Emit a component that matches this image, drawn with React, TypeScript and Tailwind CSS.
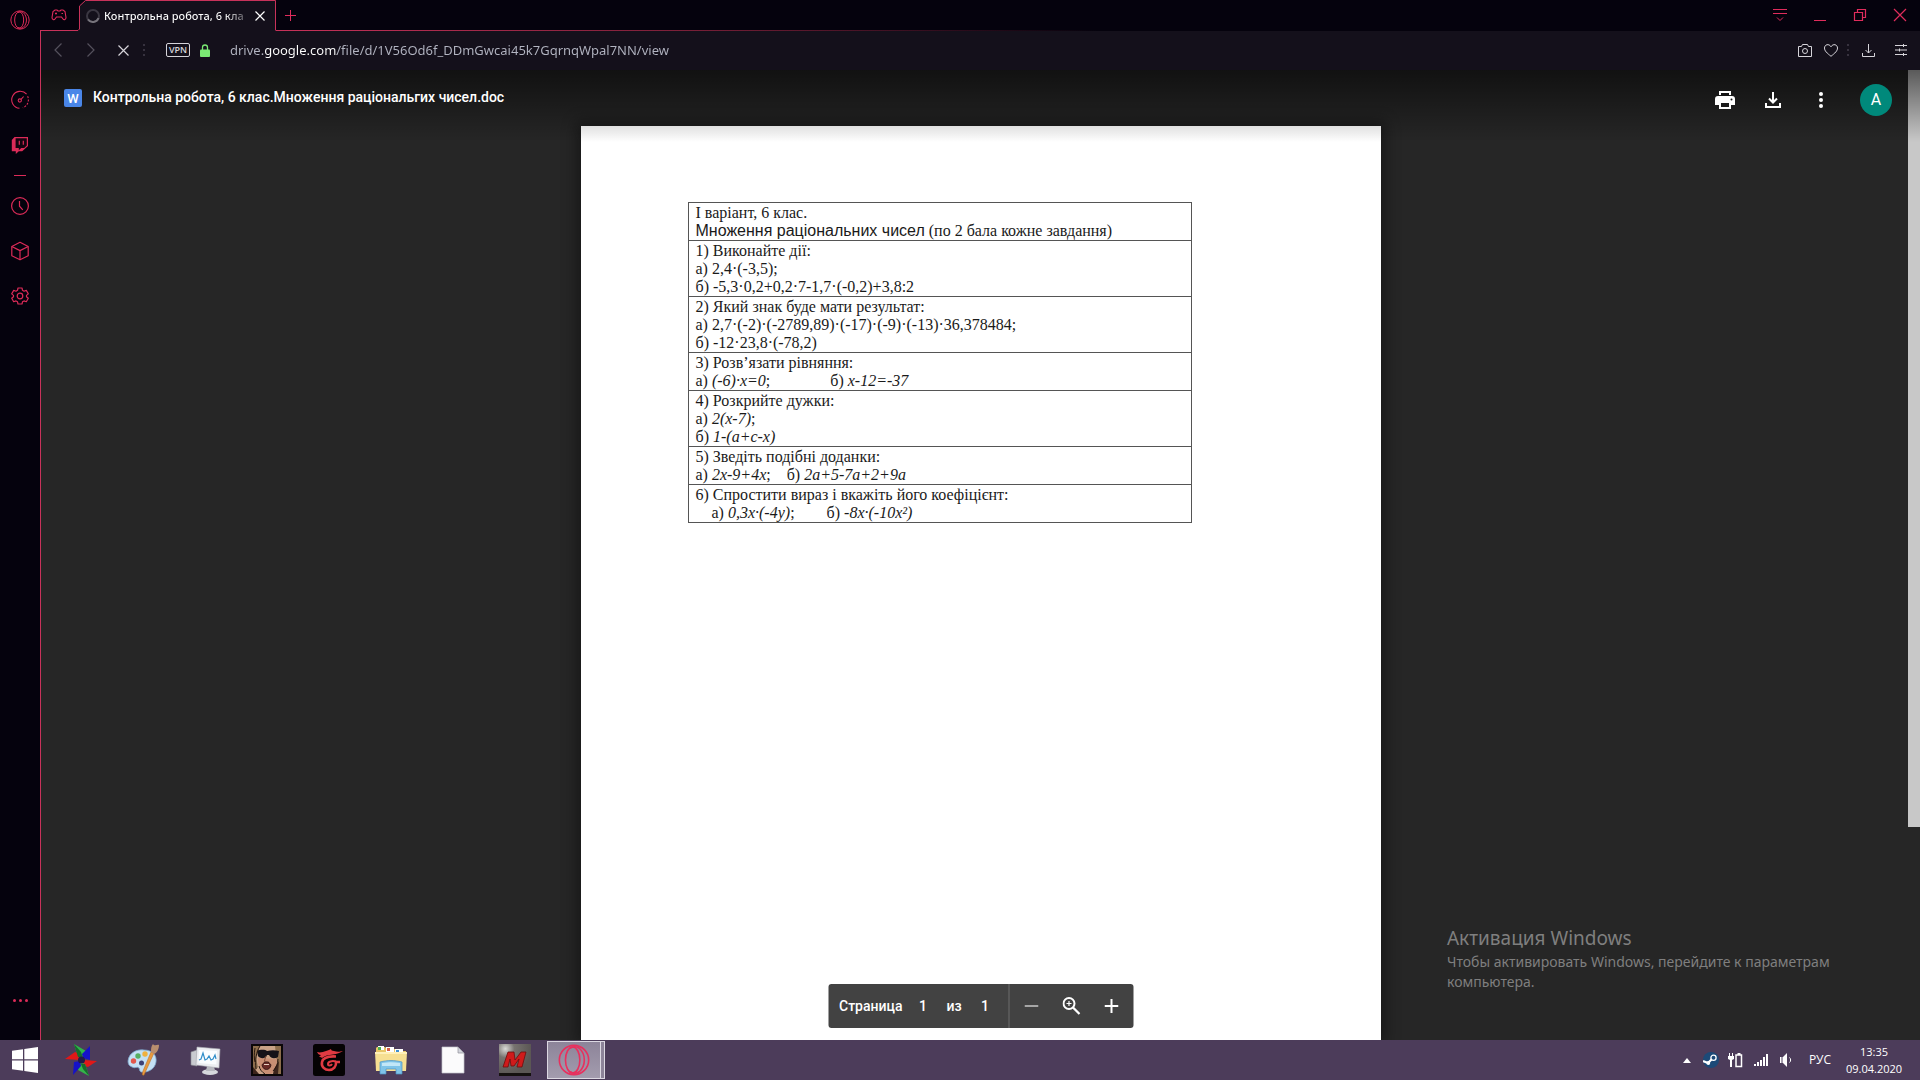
import React from "react";

type IconProps = { className?: string };

/* ---------- Browser sidebar icons ---------- */

const OperaRing = ({ className }: IconProps) => (
  <svg viewBox="0 0 24 24" className={className} fill="none" stroke="currentColor" strokeWidth="1.2" aria-hidden="true">
    <circle cx="12" cy="12" r="11" />
    <ellipse cx="11" cy="12" rx="5.4" ry="9.8" />
    <path d="M9 3.200C11.500 1.600 14 1.800 16 3.200c5 4.600 5 13 0 17.600-2 1.400-4.500 1.600-7 0" />
  </svg>
);

const GaugeIcon = () => (
  <svg viewBox="0 0 20 20" className="size-5" fill="none" stroke="currentColor" strokeWidth="1.100" aria-hidden="true">
    <path d="M9.500 18.300A8.500 8.500 0 1 1 16.600 4.200" />
    <path d="M17.600 6.200a8.500 8.500 0 0 1-4.800 11.600" strokeDasharray="2 1.400" />
    <circle cx="9.800" cy="10.500" r="1.600" />
    <path d="m11 9.300 2.600-2.800" />
  </svg>
);

const TwitchIcon = () => (
  <svg viewBox="0 0 20 20" className="size-5" aria-hidden="true">
    <path d="M4.500 2 1.800 5v11.200h4V19l3-2.800h3.400L18 11V2Z" fill="currentColor" />
    <path d="M5.600 3.200h11.200v7.400l-2.600 2.400h-3L8.800 15.200V13H5.600Z" fill="#14040f" />
    <path d="M9.300 5.800v4M13.300 5.800v4" stroke="currentColor" strokeWidth="1.200" />
  </svg>
);

const ClockIcon = () => (
  <svg viewBox="0 0 20 20" className="size-5" fill="none" stroke="currentColor" strokeWidth="1.200" aria-hidden="true">
    <circle cx="10" cy="10" r="8.400" />
    <path d="M9.500 5v5.200l3.300 3.600" />
  </svg>
);

const CubeIcon = () => (
  <svg viewBox="0 0 20 20" className="size-5" fill="none" stroke="currentColor" strokeWidth="1.200" strokeLinejoin="round" aria-hidden="true">
    <path d="m10 1.300 8.200 4.200v9.200L10 18.800l-8.200-4.100V5.500Z" />
    <path d="M1.800 5.500 10 9.600l8.200-4.100M10 9.600v9.200" />
  </svg>
);

const GearIcon = () => (
  <svg viewBox="0 0 20 20" className="size-5" fill="none" stroke="currentColor" strokeWidth="1.200" strokeLinejoin="round" aria-hidden="true">
    <path d="M8 2h4l.5 2.300 1.500.9 2.300-.8 2 3.500-1.800 1.500v1.300l1.800 1.500-2 3.500-2.300-.8-1.500.9L12 18H8l-.5-2.200-1.500-.9-2.300.8-2-3.500 1.800-1.500V9.400L1.700 7.900l2-3.500 2.300.8 1.500-.9Z" />
    <circle cx="10" cy="10" r="2.800" />
  </svg>
);

/* ---------- Taskbar icons ---------- */

const WindowsLogo = () => (
  <svg viewBox="0 0 26 26" className="size-[26px]" fill="#fff" aria-hidden="true">
    <path d="M0 3.800 11 2.200V12.200H0ZM12.300 2 26 0v12.200H12.300ZM0 13.500h11v10.200L0 22.200ZM12.300 13.500H26V26l-13.700-2Z" />
  </svg>
);

const PinwheelIcon = () => (
  <svg viewBox="0 0 32 32" className="size-8" aria-hidden="true">
    <path d="M9 0 21 7l-2 7-6-1Z" fill="#2fb54a" />
    <path d="M25 2v14l-7-2-1-4Z" fill="#1512c8" />
    <path d="m32 17-9 6-7-2 3-5Z" fill="#e01818" />
    <path d="m24 32-11-6 2-8 5 2Z" fill="#35b44a" />
    <path d="M8 31 9 18l6-1 1 5Z" fill="#1512c8" />
    <path d="m0 15 10-7 6 2-2 6Z" fill="#e01818" />
    <path d="m9 0 7 8 2 6-5-1ZM24 32l-6-7-2-5 4 0Z" fill="#156b2b" />
    <circle cx="16.500" cy="16" r="3.500" fill="#221a4a" />
  </svg>
);

const PaintIcon = () => (
  <svg viewBox="0 0 32 32" className="size-8" aria-hidden="true">
    <path d="M1 17C2 9 9 5 17 6c9 0 13 6 12 12-1 7-8 11-15 10-2-1-1-3-2-4-2-2-4 1-7-1-3-1-4-3-4-6Z" fill="#c4e0f4" stroke="#7aa6cc" strokeWidth=".8" />
    <circle cx="6.500" cy="17" r="2.700" fill="#e2584c" />
    <circle cx="11" cy="12" r="2.700" fill="#56ae62" />
    <circle cx="18" cy="10" r="2.700" fill="#efb13f" />
    <circle cx="14.500" cy="19" r="2.500" fill="#3d4175" />
    <path d="m24 8 3 1-10 22c-2 1-2-1-1-4Z" fill="#e99a3e" stroke="#b36b22" strokeWidth=".5" />
    <path d="M24 8c0-3 0-6 2-8 2 3 4 0 6 1 0 4-2 8-5 9Z" fill="#b98e6e" />
  </svg>
);

const MonitorIcon = () => (
  <svg viewBox="0 0 32 32" className="size-8" aria-hidden="true">
    <path d="m2 8 6-2v16l-6-1Z" fill="#c9cbd0" stroke="#8b8d94" strokeWidth=".6" />
    <ellipse cx="21" cy="28" rx="8" ry="3" fill="#d6d8dc" />
    <path d="M18 22h7l1 5h-9Z" fill="#b7b9bf" />
    <path d="m8 3 23 2-1 19L7 21Z" fill="#eceef1" stroke="#a9abb2" strokeWidth=".6" />
    <path d="m10 6 18 1-.7 13.500L9.500 19Z" fill="#fafdff" />
    <path d="m10 16 2-1 2-6 2 7 2-1 2-3 2 4 2-1 2-4 1 4" fill="none" stroke="#2f8dc9" strokeWidth="1.200" />
  </svg>
);

const PortraitIcon = () => (
  <svg viewBox="0 0 32 32" className="size-8" aria-hidden="true">
    <path d="M0 0h32v32H0Z" fill="#0b0708" />
    <path d="M2 2h28v28H2Z" fill="#c9a287" />
    <path d="M2 2h7L5 14l2 9-5 7ZM24 2h6v28h-6l2-10Z" fill="#8c6d4c" />
    <path d="M7 14c0 8 3 13 8 16h5c4-3 6-8 6-15Z" fill="#c98f74" />
    <path d="M6 7c4-2 9-1 10 0 4-1 8-1 12 0l-1 6c-3 2-7 2-9-2h-2c-1 4-7 4-9 1Z" fill="#141218" />
    <path d="M15 12c-1 3-2 5-1 6h4" stroke="#7d4a38" fill="none" />
    <path d="M11 21c2-4 7-4 9 0-1 6-8 6-9 0Z" fill="#6a2a26" stroke="#2c1210" strokeWidth=".8" />
    <path d="M13 20.500h5" stroke="#e8cfc0" />
    <path d="m2 23 6 7H2ZM23 25l5-8-1 13h-5Z" fill="#3c241c" />
    <path d="M9 2C5 8 4 16 5 25M4 4c-1 6-1 10 0 14M27 15c0 5-2 9-5 12M8 22c1 4 3 6 6 8" stroke="#27170f" fill="none" />
  </svg>
);

const DragonIcon = () => (
  <svg viewBox="0 0 32 32" className="size-8" aria-hidden="true">
    <rect width="32" height="32" rx="2.500" fill="#050304" />
    <path d="M4 8c3 1 6 0 9-1 2-1 4-1 5-2 0 1 1 2 3 2 3 1 5 1 9 0-3 2-6 3-10 3.500-5 .5-8 1-11 3.500-1-1-1-1-3-1l2-2c-2 0-3-1-4-3Z" fill="#e03a42" />
    <path d="M23 12.500c-8-.5-13 1.500-14 5.500-1 5 3 8 7 8 4.500 0 7.500-3.500 7-8h4" stroke="#e03a42" strokeWidth="2.600" fill="none" />
    <path d="M23 17.500c-4-1-8 0-8 2.500 0 2 3 2 4 0" stroke="#e03a42" strokeWidth="2" fill="none" />
  </svg>
);

const FolderIcon = () => (
  <svg viewBox="0 0 32 32" className="size-8" aria-hidden="true">
    <path d="M2 3h8l2 2h8l2 2h9v18H1V4Z" fill="#e9c666" />
    <path d="M3 2h6v4H3Z" fill="#fff" />
    <path d="M3 3h3v3H3Z" fill="#4fae54" />
    <path d="M11 3h8v5h-8Z" fill="#fff" />
    <path d="M12 4h3v3h-3Z" fill="#d8604a" />
    <path d="M20 5h8v4h-8Z" fill="#fff" />
    <path d="M21 6h3v3h-3Z" fill="#3d8fd0" />
    <path d="M0 8h32l-1 19H1Z" fill="#f6df92" />
    <path d="M0 8h32v2H0Z" fill="#fff0b8" />
    <path d="M5 18c8-2 14-2 22 0v12h-6v-5H11v5H5Z" fill="#7fc4e8" stroke="#4d94c4" strokeWidth=".7" />
    <path d="M7 19c7-1 12-1 18 0v3H7Z" fill="#c2e7f8" />
  </svg>
);

const DocumentIcon = () => (
  <svg viewBox="0 0 24 28" className="h-7 w-6" aria-hidden="true">
    <path d="M1 1h16l6 6v20H1Z" fill="#fbfbfc" stroke="#c4c4cc" strokeWidth=".7" />
    <path d="M17 1v6h6Z" fill="#d3d5dc" stroke="#8f8f99" strokeWidth=".7" />
  </svg>
);

const RedMIcon = () => (
  <svg viewBox="0 0 32 32" className="size-8" aria-hidden="true">
    <defs>
      <radialGradient id="metal" cx=".2" cy=".15" r=".8">
        <stop offset="0" stopColor="#d9d9d6" />
        <stop offset=".35" stopColor="#77736f" />
        <stop offset="1" stopColor="#5b5754" />
      </radialGradient>
    </defs>
    <path d="M0 0h32v32H0Z" fill="url(#metal)" />
    <path d="M0 29h32v3H0Z" fill="#15110f" />
    <path d="M9 8h6l1 8 6-8h5l-4 15h-5l2-8-5 7h-3l-1-7-2 8H4Z" fill="#cf1b1b" stroke="#6d0d0d" strokeWidth=".8" />
  </svg>
);

const SteamIcon = () => (
  <svg viewBox="0 0 16 16" className="size-4" aria-hidden="true">
    <circle cx="8" cy="8" r="8" fill="#1c4a78" />
    <path d="m0 9 5 2 5-5" stroke="#fff" strokeWidth="2.200" fill="none" />
    <circle cx="10.500" cy="5.800" r="2.600" fill="#1c4a78" stroke="#fff" strokeWidth="1.300" />
    <circle cx="5.300" cy="11" r="1.900" fill="#fff" />
  </svg>
);

const BatteryIcon = () => (
  <svg viewBox="0 0 16 16" className="size-4" aria-hidden="true">
    <path d="M1.500 1v3M4.500 1v3" stroke="#fff" />
    <path d="M0 4h6v3L4 8v7H2V8L0 7Z" fill="#fff" />
    <path d="M8 3h5.500v11.500H8Z" fill="none" stroke="#fff" strokeWidth="1.500" />
    <path d="M9.500 1h3v2h-3Z" fill="#fff" />
  </svg>
);

const SignalIcon = () => (
  <svg viewBox="0 0 16 14" className="h-[14px] w-4" fill="#fff" aria-hidden="true">
    <path d="M1 11h2v2H1ZM4 9h2v4H4ZM7 7h2v6H7ZM10 4h2v9h-2ZM13 1h2v12h-2Z" />
  </svg>
);

const SoundIcon = () => (
  <svg viewBox="0 0 16 16" className="size-4" aria-hidden="true">
    <path d="M2 5h3l4-4v14l-4-4H2Z" fill="#fff" />
    <path d="M4 5v6" stroke="#4c3d5a" />
    <path d="M11.500 5.500c1.500 1 1.500 4 0 5" stroke="#fff" fill="none" />
  </svg>
);

/* ---------- Browser chrome ---------- */

const IconButton = ({ label, className = "", children }: { label: string; className?: string; children: React.ReactNode }) => (
  <button type="button" aria-label={label} className={`flex shrink-0 items-center justify-center ${className}`}>
    {children}
  </button>
);

const Sidebar = () => (
  <aside className="flex w-10 shrink-0 flex-col items-center bg-[#05020d] text-[#dc2b58]">
    <IconButton label="Opera" className="size-10">
      <OperaRing className="size-5" />
    </IconButton>
    <div className="mt-[46px] flex flex-col gap-[17px]">
      <IconButton label="Speed Dial" className="size-7"><GaugeIcon /></IconButton>
      <IconButton label="Twitch" className="size-7"><TwitchIcon /></IconButton>
    </div>
    <div className="my-4 h-px w-3 bg-[#dc2b58]" />
    <div className="flex flex-col gap-[17px]">
      <IconButton label="History" className="size-7"><ClockIcon /></IconButton>
      <IconButton label="Extensions" className="size-7"><CubeIcon /></IconButton>
      <IconButton label="Settings" className="size-7"><GearIcon /></IconButton>
    </div>
    <IconButton label="More" className="mt-auto mb-[26px] size-7 gap-[3px]">
      <span className="size-[3px] rounded-full bg-current" />
      <span className="size-[3px] rounded-full bg-current" />
      <span className="size-[3px] rounded-full bg-current" />
    </IconButton>
  </aside>
);

const TabStrip = () => (
  <div className="flex h-[31px] bg-[#05020d] text-[#e02c5c]">
    <div className="flex w-[38px] items-center justify-center border-b border-[#c8325a]">
      <IconButton label="GX Corner" className="size-7">
        <svg viewBox="0 0 16 12" className="h-3 w-4" fill="none" stroke="currentColor" strokeWidth="1.100" aria-hidden="true">
          <path d="M4 1h2l1 1h2l1-1h2l2 1.500 1 6c0 2-2 3-3 1.500L10.500 8h-5L4 10c-1 1.500-3 .5-3-1.500l1-6Z" />
          <path d="M5 3.500v2M4 4.500h2M10.500 4.500h1.500" />
        </svg>
      </IconButton>
    </div>
    <div className="relative flex w-[198px] items-center bg-[#14101b] pl-2">
      <svg viewBox="0 0 198 31" className="absolute inset-0 h-[31px] w-[198px]" fill="none" aria-hidden="true">
        <path d="M0 0h7L1 6v25H0Z" fill="#05020d" />
        <path d="M0 30.500 1.500 29V6l6-5.500h190v30" stroke="#c8325a" />
      </svg>
      <svg viewBox="0 0 14 14" className="relative size-[14px] shrink-0" fill="none" strokeWidth="2" aria-hidden="true">
        <circle cx="7" cy="7" r="6" stroke="#3b3742" />
        <path d="M12.500 9A6 6 0 0 1 2 10.500" stroke="#77747c" />
      </svg>
      <span className="relative ml-1 w-[146px] bg-[linear-gradient(90deg,#fff_0_120px,transparent_150px)] bg-clip-text font-['Noto_Sans'] text-[11px] leading-4 font-medium whitespace-nowrap text-transparent">
        Контрольна робота, 6 кла
      </span>
      <IconButton label="Close tab" className="relative size-5 text-white">
        <svg viewBox="0 0 10 10" className="size-[10px]" stroke="currentColor" strokeWidth="1.200" aria-hidden="true">
          <path d="m.5.5 9 9m0-9-9 9" />
        </svg>
      </IconButton>
    </div>
    <div className="flex flex-1 items-center border-b [border-image:linear-gradient(90deg,#c8325a,#7a2038_25%,transparent_50%)_1]">
      <IconButton label="New tab" className="size-7">
        <svg viewBox="0 0 11 11" className="size-[11px]" stroke="currentColor" aria-hidden="true">
          <path d="M5.500 0v11M0 5.500h11" />
        </svg>
      </IconButton>
      <div className="ml-auto flex">
        <IconButton label="Tab menu" className="h-7 w-10">
          <svg viewBox="0 0 14 14" className="size-[14px]" stroke="currentColor" fill="none" aria-hidden="true">
            <path d="M0 1.500h14M0 5.500h14M4 9.500l3 3 3-3" />
          </svg>
        </IconButton>
        <IconButton label="Minimize" className="h-7 w-10">
          <svg viewBox="0 0 14 14" className="size-[14px]" stroke="currentColor" aria-hidden="true">
            <path d="M1 12.500h12" />
          </svg>
        </IconButton>
        <IconButton label="Restore" className="h-7 w-10">
          <svg viewBox="0 0 14 14" className="size-[14px]" stroke="currentColor" fill="none" strokeWidth="1.200" aria-hidden="true">
            <path d="M1.500 4.500h8v8h-8ZM4.500 4.500v-3h8v8h-3" />
          </svg>
        </IconButton>
        <IconButton label="Close" className="h-7 w-10">
          <svg viewBox="0 0 14 14" className="size-[14px]" stroke="currentColor" strokeWidth="1.200" aria-hidden="true">
            <path d="m1 1 12 12m0-12L1 13" />
          </svg>
        </IconButton>
      </div>
    </div>
  </div>
);

const Dots = () => (
  <span className="flex flex-col gap-[3px]">
    <span className="size-[2px] bg-[#37323f]" />
    <span className="size-[2px] bg-[#37323f]" />
    <span className="size-[2px] bg-[#37323f]" />
  </span>
);

const AddressBar = () => (
  <div className="flex h-[39px] items-center bg-[#14101b] pb-px text-[#d6d4da]">
    <IconButton label="Back" className="h-8 w-[34px] text-[#55515d]">
      <svg viewBox="0 0 8 14" className="h-[14px] w-2" stroke="currentColor" fill="none" strokeWidth="1.200" aria-hidden="true">
        <path d="M7.500.5 1 7l6.500 6.500" />
      </svg>
    </IconButton>
    <IconButton label="Forward" className="h-8 w-8 text-[#55515d]">
      <svg viewBox="0 0 8 14" className="h-[14px] w-2" stroke="currentColor" fill="none" strokeWidth="1.200" aria-hidden="true">
        <path d="M.5.5 7 7 .5 13.500" />
      </svg>
    </IconButton>
    <IconButton label="Stop" className="h-8 w-8">
      <svg viewBox="0 0 11 11" className="size-[11px]" stroke="currentColor" strokeWidth="1.200" aria-hidden="true">
        <path d="m.5.5 10 10m0-10-10 10" />
      </svg>
    </IconButton>
    <div className="ml-1"><Dots /></div>
    <button type="button" className="ml-[21px] h-[14px] w-6 rounded-[2px] border border-[#d6d4da] font-['Open_Sans'] text-[9px] leading-3 font-semibold">
      VPN
    </button>
    <svg viewBox="0 0 10 13" className="ml-[10px] h-[13px] w-[10px]" aria-hidden="true">
      <path d="M2.500 6V3.500a2.500 2.500 0 0 1 5 0V6" stroke="#7bea74" strokeWidth="1.300" fill="none" />
      <rect y="5.500" width="10" height="7.500" rx="1" fill="#7bea74" />
    </svg>
    <input
      type="text"
      aria-label="Address"
      defaultValue="drive.google.com/file/d/1V56Od6f_DDmGwcai45k7GqrnqWpal7NN/view"
      className="ml-5 min-w-0 flex-1 bg-[linear-gradient(90deg,#b3b5c2_0_35px,#fff_35px_107px,#b3b5c2_107px)] bg-clip-text font-['Noto_Sans'] text-[13px] leading-5 text-transparent outline-none"
    />
    <IconButton label="Snapshot" className="size-[26px]">
      <svg viewBox="0 0 14 13" className="h-[13px] w-[14px]" stroke="currentColor" fill="none" aria-hidden="true">
        <path d="M.5 2.500h3l1-2h5l1 2h3v10H.5Z" />
        <circle cx="7" cy="7" r="2.500" />
      </svg>
    </IconButton>
    <IconButton label="Bookmark" className="size-[26px]">
      <svg viewBox="0 0 14 13" className="h-[13px] w-[14px]" stroke="currentColor" fill="none" aria-hidden="true">
        <path d="M7 12.300C3 9 .5 7 .5 4 .5.500 5-.800 7 2.800 9-.800 13.500.500 13.500 4c0 3-2.500 5-6.500 8.300Z" />
      </svg>
    </IconButton>
    <div className="ml-[3px] w-[8px]"><Dots /></div>
    <IconButton label="Downloads" className="w-[26px]">
      <svg viewBox="0 0 13 13" className="size-[13px]" stroke="currentColor" fill="none" aria-hidden="true">
        <path d="M6.500 0v9M3.500 6l3 3 3-3M.5 9v3.500h12V9" />
      </svg>
    </IconButton>
    <IconButton label="Easy Setup" className="mr-[6px] ml-[7px] w-[26px]">
      <svg viewBox="0 0 12 12" className="size-3" stroke="currentColor" aria-hidden="true">
        <path d="M0 1.500h12M0 6h12M0 10.500h12M8.500 0v3M4.500 4.500v3M8.500 9v3" />
      </svg>
    </IconButton>
  </div>
);

/* ---------- Document ---------- */

const rows: React.ReactNode[][] = [
  [
    "І варіант, 6 клас.",
    <><span className="font-['Liberation_Sans']">Множення раціональних чисел</span> (по 2 бала кожне завдання)</>,
  ],
  ["1) Виконайте дії:", "а) 2,4·(-3,5);", "б) -5,3·0,2+0,2·7-1,7·(-0,2)+3,8:2"],
  ["2) Який знак буде мати результат:", "а) 2,7·(-2)·(-2789,89)·(-17)·(-9)·(-13)·36,378484;", "б) -12·23,8·(-78,2)"],
  [
    "3) Розв’язати рівняння:",
    <>а) <i>(-6)·x=0</i>;<span className="ml-15">б) <i>x-12=-37</i></span></>,
  ],
  ["4) Розкрийте дужки:", <>а) <i>2(x-7)</i>;</>, <>б) <i>1-(a+c-x)</i></>],
  [
    "5) Зведіть подібні доданки:",
    <>а) <i>2x-9+4x</i>;<span className="ml-4">б) <i>2a+5-7a+2+9a</i></span></>,
  ],
  [
    "6) Спростити вираз і вкажіть його коефіцієнт:",
    <><span className="ml-4">а) <i>0,3x·(-4y)</i>;</span><span className="ml-8">б) <i>-8x·(-10x²)</i></span></>,
  ],
];

const DocumentPage = () => (
  <article className="mx-auto h-full w-full max-w-[800px] bg-white pt-[76px] pr-[189px] pl-[107px] shadow-[0_0_14px_4px_rgba(0,0,0,0.4)]">
    <table className="w-full border-collapse border border-[#555] font-['Liberation_Serif'] text-[16px] leading-[18px] text-[#1a1a1a]">
      <tbody>
        {rows.map((lines, i) => (
          <tr key={i}>
            <td className="border border-[#555] px-[7px] pt-px pb-0">
              {lines.map((line, j) => (
                <div key={j} className="whitespace-nowrap">{line}</div>
              ))}
            </td>
          </tr>
        ))}
      </tbody>
    </table>
  </article>
);

const ViewerHeader = () => (
  <header className="absolute inset-x-0 top-0 flex h-[72px] items-start bg-linear-to-b from-black/55 to-transparent text-white">
    <span className="mt-[19px] ml-[23px] flex size-[18px] items-center justify-center rounded-[2px] bg-[#4a86e8] font-['Roboto'] text-[13px] leading-none font-medium">W</span>
    <h1 className="mt-[17px] ml-[11px] font-['Roboto'] text-[14px] leading-5 font-medium">
      Контрольна робота, 6 клас.Множення раціональгих чисел.doc
    </h1>
    <div className="mt-[6px] mr-[22px] ml-auto flex items-center">
      <IconButton label="Print" className="size-12">
        <svg viewBox="0 0 20 18" className="h-[18px] w-5" aria-hidden="true">
          <path d="M4 0h12v4H4ZM3 5h14a3 3 0 0 1 3 3v6h-4v4H4v-4H0V8a3 3 0 0 1 3-3Zm3 7v4h8v-4Z" fill="#fff" fillRule="evenodd" />
          <path d="M6 2h8v3H6Z" fill="#151515" />
          <circle cx="16.500" cy="8.500" r="1" fill="#151515" />
        </svg>
      </IconButton>
      <IconButton label="Download" className="size-12">
        <svg viewBox="0 0 16 16" className="size-4" stroke="#fff" strokeWidth="2" fill="none" aria-hidden="true">
          <path d="M8 0v10M4 6.500l4 4 4-4M1 11v4h14v-4" />
        </svg>
      </IconButton>
      <IconButton label="More actions" className="size-12">
        <svg viewBox="0 0 4 16" className="h-4 w-1" fill="#fff" aria-hidden="true">
          <circle cx="2" cy="2" r="2" /><circle cx="2" cy="8" r="2" /><circle cx="2" cy="14" r="2" />
        </svg>
      </IconButton>
      <button type="button" aria-label="Account" className="mr-[6px] ml-[15px] size-8 rounded-full bg-[#00897b] font-['Roboto'] text-[16px] leading-8">
        A
      </button>
    </div>
  </header>
);

const PageControls = () => (
  <div className="absolute bottom-3 left-1/2 flex h-11 w-[305px] -translate-x-1/2 items-center rounded-[3px] bg-[#424242] font-['Roboto'] text-[14px] leading-5 font-medium text-white">
    <label htmlFor="page-number" className="w-[72px] pl-[11px]">Страница</label>
    <input id="page-number" type="text" defaultValue="1" className="ml-[13px] w-5 bg-transparent text-center outline-none" />
    <span className="ml-[11px] w-5 text-center">из</span>
    <span className="ml-[11px] w-5 text-center">1</span>
    <span className="ml-auto h-11 w-px bg-[#6d6d6d]" />
    <IconButton label="Zoom out" className="ml-[2px] size-10 text-[#a6a6a6]">
      <svg viewBox="0 0 14 14" className="size-[14px]" stroke="currentColor" strokeWidth="2" aria-hidden="true"><path d="M0 7h14" /></svg>
    </IconButton>
    <IconButton label="Fit to page" className="size-10">
      <svg viewBox="0 0 18 18" className="size-[18px]" stroke="currentColor" strokeWidth="2" fill="none" aria-hidden="true">
        <circle cx="6.500" cy="6.500" r="5.500" />
        <path d="m10.500 10.500 6.500 6.500" strokeWidth="2.300" />
        <path d="M6.500 4v5M4 6.500h5" strokeWidth="1.200" />
      </svg>
    </IconButton>
    <IconButton label="Zoom in" className="mr-[2px] size-10">
      <svg viewBox="0 0 14 14" className="size-[14px]" stroke="currentColor" strokeWidth="2" aria-hidden="true"><path d="M0 7h14M7 0v14" /></svg>
    </IconButton>
  </div>
);

const Viewer = () => (
  <main className="relative min-h-0 flex-1 overflow-hidden bg-[#262626] pt-14">
    <DocumentPage />
    <div className="absolute top-0 right-0 h-[78%] w-3 bg-[#c8c8c8]" />
    <ViewerHeader />
    <PageControls />
    <div className="absolute right-[60px] bottom-12 w-[413px] font-['Noto_Sans'] text-[#7f7f7f]">
      <p className="text-[19px] leading-7">Активация Windows</p>
      <p className="w-[400px] text-[14px] leading-5">Чтобы активировать Windows, перейдите к параметрам компьютера.</p>
    </div>
  </main>
);

/* ---------- Taskbar ---------- */

const apps = [
  { label: "Pinwheel", icon: <PinwheelIcon /> },
  { label: "Paint", icon: <PaintIcon /> },
  { label: "Resource Monitor", icon: <MonitorIcon /> },
  { label: "San Andreas", icon: <PortraitIcon /> },
  { label: "Garena", icon: <DragonIcon /> },
  { label: "Explorer", icon: <FolderIcon /> },
  { label: "Document", icon: <DocumentIcon /> },
  { label: "M", icon: <RedMIcon /> },
];

const Taskbar = () => (
  <footer className="flex h-10 shrink-0 items-center bg-[#4c3c5a] font-['Open_Sans'] text-white">
    <IconButton label="Start" className="h-10 w-[50px]"><WindowsLogo /></IconButton>
    {apps.map((app) => (
      <IconButton key={app.label} label={app.label} className="h-10 w-[62px]">{app.icon}</IconButton>
    ))}
    <div className="ml-px flex h-[38px]">
      <IconButton label="Opera GX" className="w-[54px] border border-[#dcd8e2] bg-linear-to-b from-[#8d8499] to-[#a39cae] text-[#e8305e]">
        <OperaRing className="size-8" />
      </IconButton>
      <span className="w-1 border border-l-0 border-[#dcd8e2] bg-[#8d8499]" />
    </div>
    <div className="ml-auto flex items-center gap-[9px]">
      <IconButton label="Show hidden icons" className="mr-[3px]">
        <svg viewBox="0 0 8 5" className="h-[5px] w-2" fill="#fff" aria-hidden="true"><path d="M4 0 8 5H0Z" /></svg>
      </IconButton>
      <IconButton label="Steam"><SteamIcon /></IconButton>
      <IconButton label="Battery"><BatteryIcon /></IconButton>
      <IconButton label="Network"><SignalIcon /></IconButton>
      <IconButton label="Volume"><SoundIcon /></IconButton>
    </div>
    <button type="button" className="ml-[14px] w-6 text-center text-[12px] leading-4">РУС</button>
    <button type="button" className="mr-3 ml-2 w-[68px] text-center text-[11px] leading-[17px]">
      13:35<br />09.04.2020
    </button>
  </footer>
);

export default function App() {
  return (
    <div className="flex h-screen flex-col overflow-hidden">
      <div className="flex min-h-0 flex-1">
        <Sidebar />
        <div className="flex min-w-0 flex-1 flex-col">
          <TabStrip />
          <div className="flex min-h-0 flex-1 flex-col border-l border-[#c8325a]">
            <AddressBar />
            <Viewer />
          </div>
        </div>
      </div>
      <Taskbar />
    </div>
  );
}
